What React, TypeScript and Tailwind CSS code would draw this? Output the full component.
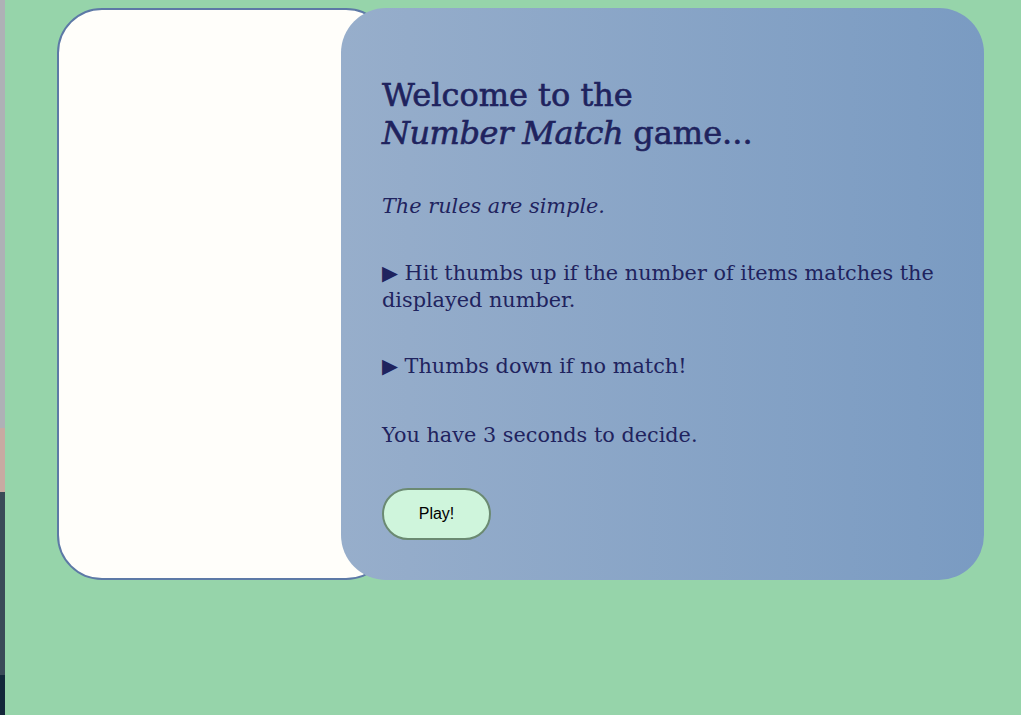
import React from 'react';

const serif = { fontFamily: '"DejaVu Serif", "Liberation Serif", serif' };

const App: React.FC = () => {
  return (
    <div className="flex min-h-[715px] w-full bg-[#96d4aa]">
      {/* window edge behind the page */}
      <div className="flex w-[5px] shrink-0 flex-col">
        <div className="h-[428px] bg-[#aeb1b6]"></div>
        <div className="h-[64px] bg-[#c8aaa2]"></div>
        <div className="h-[183px] bg-[#3a4a58]"></div>
        <div className="flex-1 bg-[#13283a]"></div>
      </div>

      <div className="flex-1 pl-[52px] pt-[8px]">
        <div className="flex h-[572px] w-[927px]">
          {/* Left panel */}
          <div className="h-full w-[334px] shrink-0 rounded-[45px] border-2 border-[#5d79a6] bg-[#fffefa]"></div>

          {/* Right panel */}
          <div
            className="relative -ml-[50px] flex h-full flex-1 flex-col rounded-[45px] bg-gradient-to-r from-[#97aecb] to-[#7a9bc2] pl-[41px] pr-[40px] pt-[68px] text-[#1f235e]"
            style={serif}
          >
            <h1 className="text-[32px] leading-[38px] font-normal [-webkit-text-stroke:0.6px_#1f235e]">
              Welcome to the
              <br />
              <em className="tracking-[-0.5px]">Number Match</em> game...
            </h1>
            <p className="mt-[41px] text-[20.8px] italic leading-[27px]">The rules are simple.</p>
            <p className="mt-[40px] text-[20.8px] leading-[27px]">
              ▶ Hit thumbs up if the number of items matches the displayed number.
            </p>
            <p className="mt-[39px] text-[20.8px] leading-[27px]">▶ Thumbs down if no match!</p>
            <p className="mt-[42px] text-[20.8px] leading-[27px]">You have 3 seconds to decide.</p>
            <div className="mt-[39px]">
              <button
                className="h-[52px] w-[109px] rounded-full border-2 border-[#6b8a72] bg-[#cff5dc] text-[16px] text-black"
                style={{ fontFamily: '"Liberation Sans", Arial, sans-serif' }}
              >
                Play!
              </button>
            </div>
          </div>
        </div>
      </div>
    </div>
  );
};

export default App;
